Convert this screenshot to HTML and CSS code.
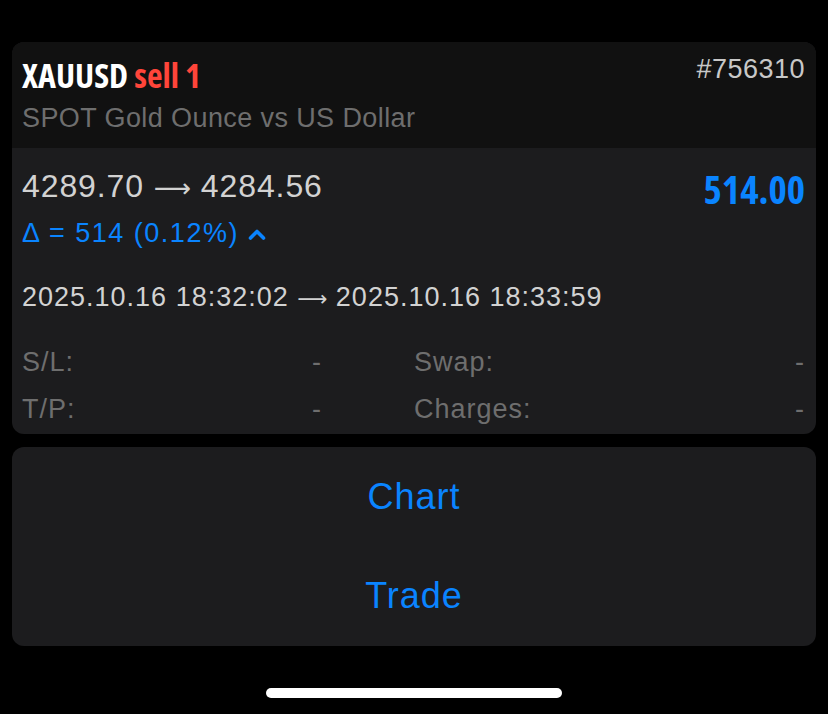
FILE: index.html
```html
<!DOCTYPE html>
<html>
<head>
<meta charset="utf-8">
<link rel="stylesheet" href="styles.css">
</head>
<body>
<div class="sheet">
  <div class="card">
    <div class="card-head">
      <div class="title-row">
        <div class="title"><span class="sym">XAUUSD</span> <span class="side">sell 1</span></div>
        <div class="ticket">#756310</div>
      </div>
      <div class="desc">SPOT Gold Ounce vs US Dollar</div>
    </div>
    <div class="card-body">
      <div class="price-row">
        <div class="prices">4289.70 <span class="arrow">⟶</span> 4284.56</div>
        <div class="profit">514.00</div>
      </div>
      <div class="delta">Δ = 514 (0.12%) <svg class="caret" width="18" height="12" viewBox="0 0 18 12"><polyline points="2.5,10 9,3.5 15.5,10" fill="none" stroke="#0a84ff" stroke-width="3.6" stroke-linecap="round" stroke-linejoin="round"/></svg></div>
      <div class="dates">2025.10.16 18:32:02 <span class="arrow small">⟶</span> 2025.10.16 18:33:59</div>
      <div class="fields">
        <div class="field"><span>S/L:</span><span>-</span></div>
        <div class="field"><span>Swap:</span><span>-</span></div>
        <div class="field"><span>T/P:</span><span>-</span></div>
        <div class="field"><span>Charges:</span><span>-</span></div>
      </div>
    </div>
  </div>
  <div class="actions">
    <div class="action">Chart</div>
    <div class="action">Trade</div>
  </div>
  <div class="home-wrap"><div class="home"></div></div>
</div>
</body>
</html>
```
FILE: styles.css
```css
html, body {
  margin: 0;
  padding: 0;
  background: #000;
}
body {
  font-family: "Liberation Sans", Arial, sans-serif;
  width: 828px;
  height: 714px;
  overflow: hidden;
}
.sheet {
  padding: 42px 12px 0;
}
.card {
  background: #1c1c1e;
  border-radius: 12px;
  overflow: hidden;
}
.card-head {
  background: #111111;
  padding: 13px 11px 7px 10px;
}
.title-row {
  display: flex;
  justify-content: space-between;
  align-items: flex-start;
}
.title {
  font-family: "Open Sans", sans-serif;
  font-stretch: 75%;
  font-weight: 700;
  font-size: 34px;
  line-height: 40px;
}
.sym { color: #ffffff; }
.side { color: #ff453a; }
.ticket {
  color: #c8c8c8;
  font-size: 27px;
  letter-spacing: 0.5px;
  line-height: 40px;
  margin-top: -6px;
}
.desc {
  color: #6e6e6e;
  font-size: 27px;
  letter-spacing: 0.4px;
  line-height: 46px;
}
.card-body {
  padding: 18px 11px 1px 10px;
}
.price-row {
  display: flex;
  justify-content: space-between;
  align-items: flex-start;
}
.prices {
  color: #d2d2d2;
  font-size: 32px;
  letter-spacing: 0.9px;
  line-height: 40px;
}
.arrow {
  font-family: "DejaVu Sans", sans-serif;
  font-size: 26px;
  letter-spacing: 0;
  line-height: 0;
}
.arrow.small {
  font-size: 21px;
}
.profit {
  color: #0a84ff;
  font-family: "Open Sans", sans-serif;
  font-stretch: 75%;
  font-weight: 700;
  font-size: 39px;
  line-height: 40px;
  margin-top: 3px;
}
.delta {
  color: #0a84ff;
  font-size: 27px;
  letter-spacing: 1.5px;
  line-height: 40px;
  margin-top: 4px;
  display: flex;
  align-items: center;
  white-space: pre;
}
.caret {
  margin-left: 0;
  margin-top: 2px;
}
.dates {
  color: #d2d2d2;
  font-size: 27px;
  letter-spacing: 1px;
  line-height: 40px;
  margin-top: 24px;
}
.fields {
  display: grid;
  grid-template-columns: 300px 1fr;
  column-gap: 92px;
  margin-top: 22px;
}
.field {
  display: flex;
  justify-content: space-between;
  color: #6e6e6e;
  font-size: 27px;
  letter-spacing: 1px;
  line-height: 47px;
}
.actions {
  margin-top: 13px;
  background: #1c1c1e;
  border-radius: 12px;
  height: 199px;
  display: flex;
  flex-direction: column;
}
.action {
  flex: 1;
  display: flex;
  align-items: center;
  justify-content: center;
  color: #0a84ff;
  font-size: 36px;
  letter-spacing: 1px;
}
.home-wrap {
  display: flex;
  justify-content: center;
  padding-top: 42px;
}
.home {
  width: 296px;
  height: 10px;
  border-radius: 5px;
  background: #ffffff;
}
```
